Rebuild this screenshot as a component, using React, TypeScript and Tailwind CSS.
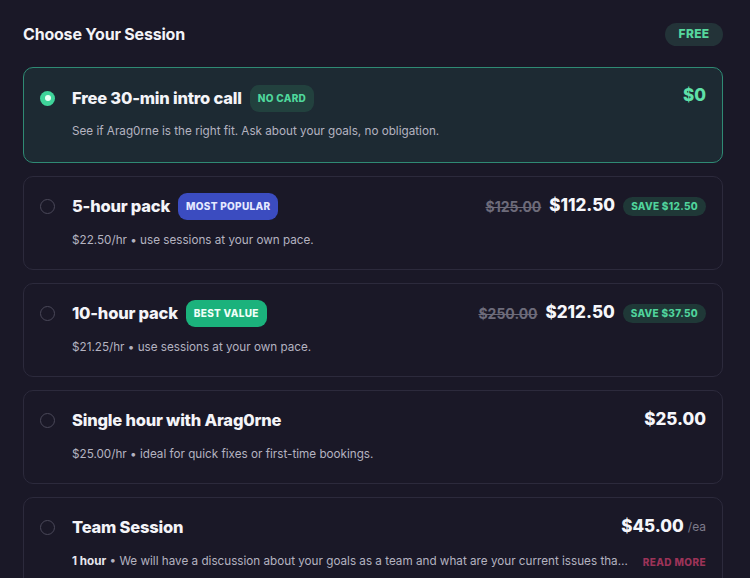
import React from "react";

type Plan = {
  title: string;
  badge?: { text: string; cls: string };
  desc: React.ReactNode;
  old?: string;
  price: string;
  priceCls?: string;
  save?: string;
  unit?: string;
  selected?: boolean;
  readMore?: boolean;
};

const plans: Plan[] = [
  {
    title: "Free 30-min intro call",
    badge: { text: "NO CARD", cls: "bg-[#22413e] text-[#4fd89c]" },
    desc: "See if Arag0rne is the right fit. Ask about your goals, no obligation.",
    price: "$0",
    priceCls: "text-[#5fe0a8] -mt-[4px]",
    selected: true,
  },
  {
    title: "5-hour pack",
    badge: { text: "MOST POPULAR", cls: "bg-[#3b4cc0] text-[#e6e9ff]" },
    desc: "$22.50/hr • use sessions at your own pace.",
    old: "$125.00",
    price: "$112.50",
    save: "SAVE $12.50",
  },
  {
    title: "10-hour pack",
    badge: { text: "BEST VALUE", cls: "bg-[#1bb27c] text-[#f0fff8]" },
    desc: "$21.25/hr • use sessions at your own pace.",
    old: "$250.00",
    price: "$212.50",
    save: "SAVE $37.50",
  },
  {
    title: "Single hour with Arag0rne",
    desc: "$25.00/hr • ideal for quick fixes or first-time bookings.",
    price: "$25.00",
  },
  {
    title: "Team Session",
    desc: (
      <>
        <span className="font-bold text-[#e6e6ee]">1 hour</span> • We will have a discussion about your goals as a team and what are your current issues that you want to solve together
      </>
    ),
    price: "$45.00",
    unit: "/ea",
    readMore: true,
  },
];

function Card({ p }: { p: Plan }) {
  return (
    <div
      className={
        "shrink-0 rounded-[10px] border pl-[16px] pr-[16px] " +
        (p.selected
          ? "border-[#2f8a74] bg-[#1d2a33] pt-[16px] pb-[22px]"
          : "border-[#2c2a3c] bg-[#1a1827] pt-[15px] pb-[20px]")
      }
    >
      <div className="flex h-[28px] items-center">
        <div className="flex w-[32px] shrink-0 items-center">
          {p.selected ? (
            <div className="flex h-[15px] w-[15px] items-center justify-center rounded-full bg-[#3fd39a]">
              <div className="h-[6px] w-[6px] rounded-full bg-[#e8fff5]" />
            </div>
          ) : (
            <div className="h-[15px] w-[15px] rounded-full border border-[#4a4859]" />
          )}
        </div>
        <div className="text-[16.5px] font-extrabold tracking-[-0.2px] text-[#f4f4f8]">
          {p.title}
        </div>
        {p.badge && (
          <div
            className={
              "ml-[8px] flex h-[27px] items-center rounded-[9px] px-[8px] text-[10px] font-extrabold tracking-[0.3px] " +
              p.badge.cls
            }
          >
            {p.badge.text}
          </div>
        )}
        <div className="ml-auto flex items-center">
          {p.old && (
            <span className="mr-[8px] text-[14px] font-bold text-[#6d6b7a] line-through">
              {p.old}
            </span>
          )}
          <span
            className={
              "text-[17px] font-extrabold " + (p.priceCls ?? "text-[#f6f6fa]")
            }
          >
            {p.price}
          </span>
          {p.unit && (
            <span className="ml-[4px] text-[12px] text-[#7d7b8a]">{p.unit}</span>
          )}
          {p.save && (
            <span className="ml-[8px] flex h-[19px] items-center rounded-full bg-[#1f3837] px-[8px] text-[10px] font-extrabold tracking-[0.3px] text-[#50d49c]">
              {p.save}
            </span>
          )}
        </div>
      </div>
      <div
        className={
          "flex h-[16px] items-center pl-[32px] text-[11.7px] text-[#b4b3c0] " +
          (p.selected ? "mt-[12px]" : "mt-[13px]")
        }
      >
        <div className="min-w-0 flex-1 truncate">{p.desc}</div>
        {p.readMore && (
          <span className="ml-[12px] shrink-0 text-[10px] font-extrabold tracking-[0.4px] text-[#9c3358]">
            READ MORE
          </span>
        )}
      </div>
    </div>
  );
}

export default function App() {
  return (
    <div
      className="h-[578px] w-[750px] overflow-hidden bg-[#1a1827]"
      style={{ fontFamily: "Inter, 'Noto Sans', sans-serif" }}
    >
      <div className="flex h-[67px] items-center justify-between pl-[23px] pr-[27px] pt-[1px]">
        <div className="text-[16px] font-bold tracking-[-0.2px] text-[#f3f3f7]">
          Choose Your Session
        </div>
        <div className="flex h-[23px] w-[58px] items-center justify-center rounded-full bg-[#233338] text-[12px] font-extrabold tracking-[0.3px] text-[#56d89e]">
          FREE
        </div>
      </div>
      <div className="flex flex-col gap-[13px] pl-[23px] pr-[27px]">
        {plans.map((p) => (
          <Card key={p.title} p={p} />
        ))}
      </div>
    </div>
  );
}
